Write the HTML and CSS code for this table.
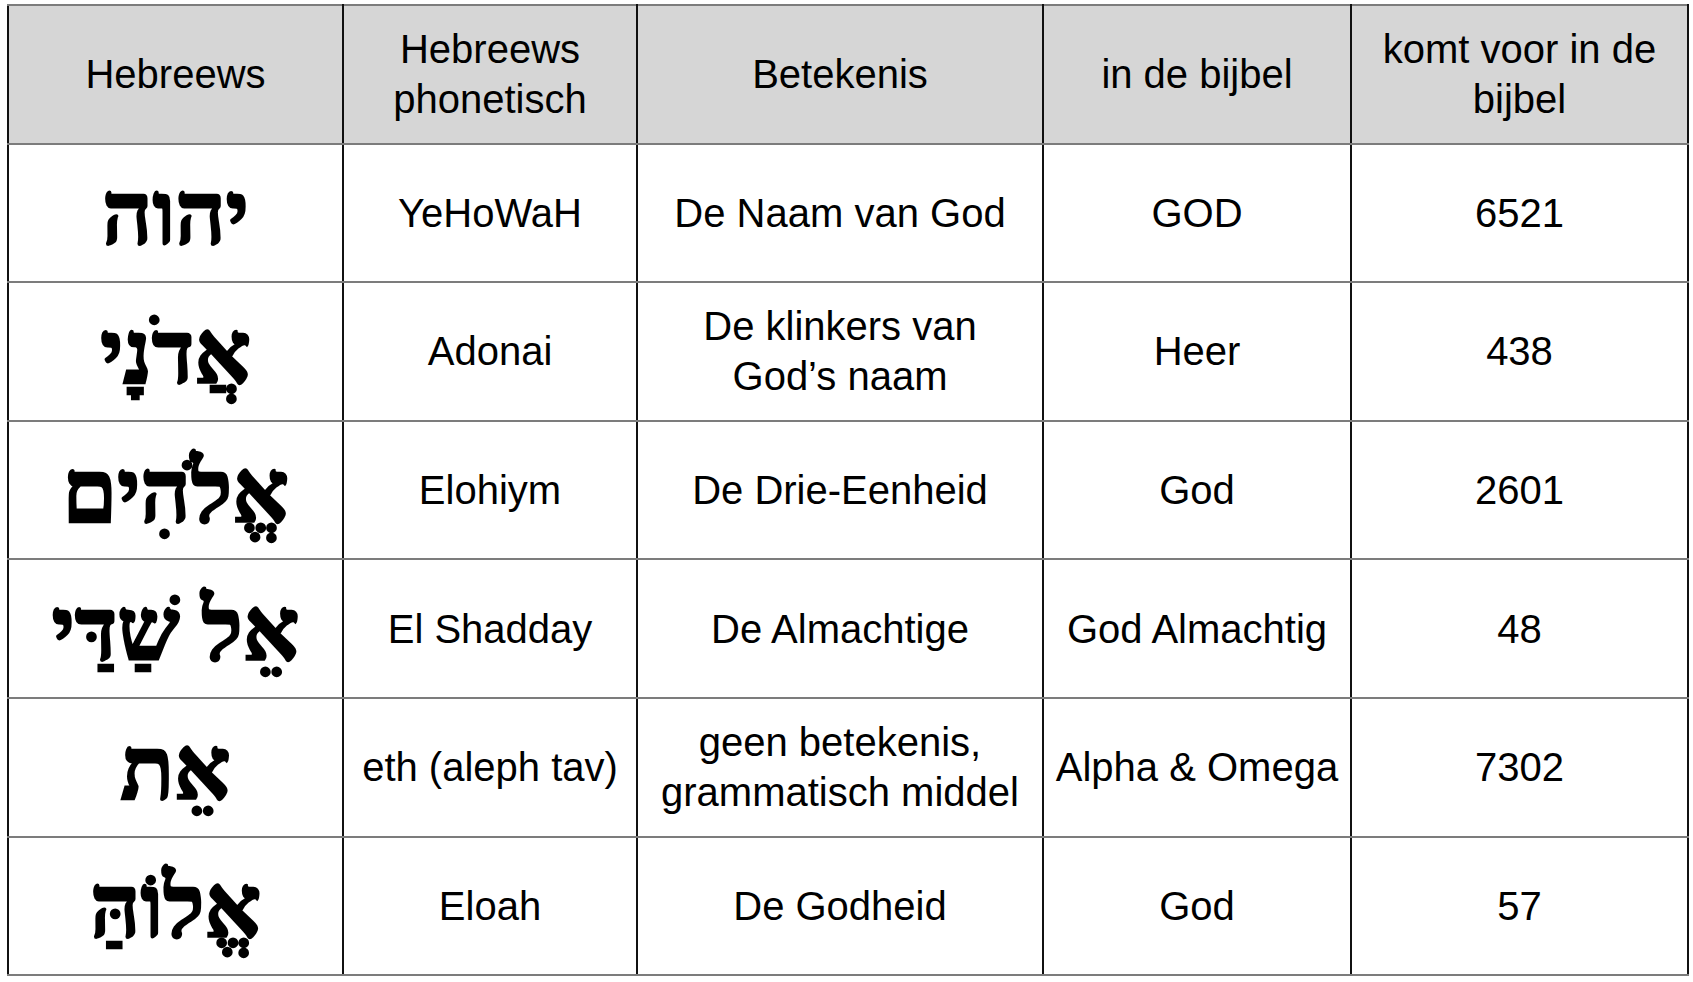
FILE: index.html
```html
<!DOCTYPE html>
<html lang="nl">
<head>
<meta charset="utf-8">
<title>Namen van God</title>
<link rel="stylesheet" href="styles.css">
</head>
<body>
<table class="names">
  <colgroup>
    <col class="c1"><col class="c2"><col class="c3"><col class="c4"><col class="c5">
  </colgroup>
  <thead>
    <tr>
      <th>Hebreews</th>
      <th>Hebreews<br>phonetisch</th>
      <th>Betekenis</th>
      <th>in de bijbel</th>
      <th>komt voor in de<br>bijbel</th>
    </tr>
  </thead>
  <tbody>
    <tr>
      <td class="heb" dir="rtl" lang="he">יהוה</td>
      <td>YeHoWaH</td>
      <td>De Naam van God</td>
      <td>GOD</td>
      <td>6521</td>
    </tr>
    <tr>
      <td class="heb" dir="rtl" lang="he">אֲדֹנָי</td>
      <td>Adonai</td>
      <td>De klinkers van<br>God’s naam</td>
      <td>Heer</td>
      <td>438</td>
    </tr>
    <tr>
      <td class="heb" dir="rtl" lang="he">אֱלֹהִים</td>
      <td>Elohiym</td>
      <td>De Drie-Eenheid</td>
      <td>God</td>
      <td>2601</td>
    </tr>
    <tr>
      <td class="heb" dir="rtl" lang="he">אֵל שַׁדַּי</td>
      <td>El Shadday</td>
      <td>De Almachtige</td>
      <td>God Almachtig</td>
      <td>48</td>
    </tr>
    <tr>
      <td class="heb" dir="rtl" lang="he">אֵת</td>
      <td>eth (aleph tav)</td>
      <td>geen betekenis,<br>grammatisch middel</td>
      <td>Alpha &amp; Omega</td>
      <td>7302</td>
    </tr>
    <tr>
      <td class="heb" dir="rtl" lang="he">אֱלוֹהַּ</td>
      <td>Eloah</td>
      <td>De Godheid</td>
      <td>God</td>
      <td>57</td>
    </tr>
  </tbody>
</table>
</body>
</html>
```

FILE: styles.css
```css
html, body {
  margin: 0;
  padding: 0;
  background: #ffffff;
}

body {
  padding: 4px 0 0 7px;
  font-family: "Liberation Sans", Arial, Helvetica, sans-serif;
  color: #000000;
}

.names {
  border-collapse: collapse;
  table-layout: fixed;
  width: 1680px;
}

.c1 { width: 335px; }
.c2 { width: 294px; }
.c3 { width: 406px; }
.c4 { width: 308px; }
.c5 { width: 337px; }

.names th,
.names td {
  height: 136.6px;
  padding: 0;
  text-align: center;
  vertical-align: middle;
  font-size: 40px;
  font-weight: normal;
  line-height: 50px;
  border-top: 2px solid #7c7c7c;
  border-bottom: 2px solid #7c7c7c;
  border-left: 2px solid #111111;
  border-right: 2px solid #111111;
  white-space: nowrap;
}

.names th {
  background: #d6d6d6;
}

.names td.heb {
  font-family: "Liberation Serif", "Times New Roman", "DejaVu Sans", serif;
  font-weight: bold;
  font-size: 88px;
  line-height: 1;
  padding-top: 5px;
  box-sizing: border-box;
  -webkit-text-stroke: 2.5px #000000;
}
```
